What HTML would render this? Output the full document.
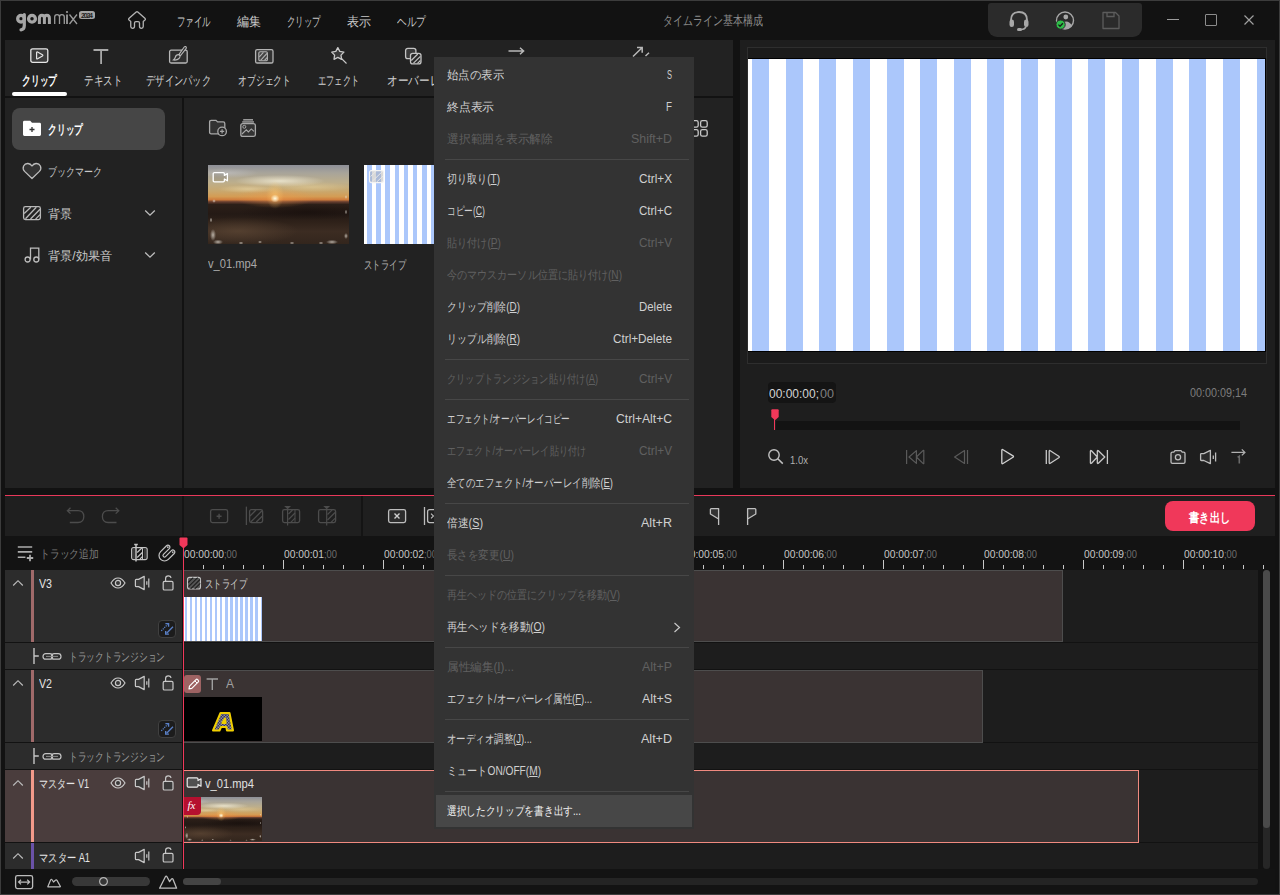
<!DOCTYPE html><html><head><meta charset="utf-8"><style>
html,body{margin:0;padding:0;}
body{width:1280px;height:895px;overflow:hidden;position:relative;background:#121212;font-family:'Liberation Sans',sans-serif;}
body>div,body>svg,body>span{position:absolute;box-sizing:border-box;}
body>span{white-space:nowrap;transform-origin:0 0;}
</style></head><body>
<div style="left:0px;top:0px;width:1280px;height:895px;background:#121212;"></div>
<div style="left:5px;top:40px;width:728px;height:56px;background:#222222;"></div>
<div style="left:5px;top:98px;width:177px;height:390px;background:#222222;"></div>
<div style="left:184px;top:98px;width:549px;height:390px;background:#222222;"></div>
<div style="left:740px;top:40px;width:535px;height:448px;background:#1e1e1e;"></div>
<div style="left:747px;top:47px;width:520px;height:317px;background:#1b1b1b;border:1px solid #2e2e2e"></div>
<div style="left:748px;top:58px;width:518px;height:294px;background:#000;"></div>
<div style="left:748px;top:59px;width:517px;height:292px;background:repeating-linear-gradient(90deg,#ffffff -12.64px,#ffffff 4px,#abc7fb 4px,#abc7fb 21px);"></div>
<div style="left:5px;top:495px;width:1270px;height:1px;background:#e8385a;"></div>
<div style="left:5px;top:496px;width:1270px;height:40px;background:#1f1f1f;"></div>
<div style="left:182px;top:496px;width:2px;height:40px;background:#141414;"></div>
<div style="left:361px;top:496px;width:2px;height:40px;background:#141414;"></div>
<div style="left:5px;top:536px;width:1270px;height:34px;background:#131313;"></div>
<div style="left:5px;top:570px;width:177px;height:72px;background:#2c2c2c;"></div>
<div style="left:184px;top:570px;width:1074px;height:72px;background:#1d1d1d;"></div>
<div style="left:5px;top:643px;width:177px;height:26px;background:#2c2c2c;"></div>
<div style="left:184px;top:643px;width:1074px;height:26px;background:#1d1d1d;"></div>
<div style="left:5px;top:670px;width:177px;height:72px;background:#2c2c2c;"></div>
<div style="left:184px;top:670px;width:1074px;height:72px;background:#1d1d1d;"></div>
<div style="left:5px;top:743px;width:177px;height:26px;background:#2c2c2c;"></div>
<div style="left:184px;top:743px;width:1074px;height:26px;background:#1d1d1d;"></div>
<div style="left:5px;top:770px;width:177px;height:72px;background:#4a3d3d;"></div>
<div style="left:184px;top:770px;width:1074px;height:72px;background:#1d1d1d;"></div>
<div style="left:5px;top:843px;width:177px;height:26px;background:#2c2c2c;"></div>
<div style="left:184px;top:843px;width:1074px;height:26px;background:#1d1d1d;"></div>
<div style="left:31px;top:570px;width:3px;height:72px;background:#a06a6a;"></div>
<div style="left:31px;top:670px;width:3px;height:72px;background:#a06a6a;"></div>
<div style="left:31px;top:770px;width:3px;height:72px;background:#f29a8a;"></div>
<div style="left:31px;top:843px;width:3px;height:26px;background:#6a52a8;"></div>
<div style="left:184px;top:570px;width:879px;height:72px;background:#3a3333;border:1px solid #4d4d4d;border-left:none"></div>
<div style="left:184px;top:670px;width:799px;height:73px;background:#3a3333;border:1px solid #4d4d4d;border-left:none"></div>
<div style="left:184px;top:770px;width:955px;height:73px;background:#3a3333;border:1px solid #f08a80;border-left:none"></div>
<div style="left:5px;top:869px;width:1270px;height:25px;background:#131313;"></div>
<div style="left:1263px;top:570px;width:7px;height:299px;background:#262626;border-radius:4px"></div>
<div style="left:1263px;top:570px;width:7px;height:258px;background:#4a4a4a;border-radius:4px"></div>
<div style="left:12px;top:92px;width:55px;height:4px;background:#ffffff;border-radius:2px"></div>
<div style="left:12px;top:108px;width:153px;height:42px;background:#464646;border-radius:8px"></div>
<div style="left:208px;top:165px;width:141px;height:79px;background:radial-gradient(ellipse 3.0px 6.0px at 5.0px 70.0px,rgba(235,230,220,.7) 0,rgba(235,230,220,0) 100%),radial-gradient(ellipse 5.0px 2.5px at 10.0px 77.0px,rgba(235,230,220,.7) 0,rgba(235,230,220,0) 100%),radial-gradient(ellipse 1.5px 2.5px at 3.0px 55.0px,rgba(235,230,220,.7) 0,rgba(235,230,220,0) 100%),radial-gradient(ellipse 2.5px 1.5px at 33.0px 78.0px,rgba(235,230,220,.7) 0,rgba(235,230,220,0) 100%),radial-gradient(ellipse 2.0px 1.5px at 52.0px 77.0px,rgba(235,230,220,.7) 0,rgba(235,230,220,0) 100%),radial-gradient(ellipse 2.5px 1.3px at 84.0px 78.0px,rgba(235,230,220,.7) 0,rgba(235,230,220,0) 100%),radial-gradient(ellipse 6.0px 2.2px at 124.0px 77.0px,rgba(235,230,220,.7) 0,rgba(235,230,220,0) 100%),radial-gradient(ellipse 2.0px 3.0px at 138.0px 71.0px,rgba(235,230,220,.7) 0,rgba(235,230,220,0) 100%),radial-gradient(ellipse 1.2px 2.0px at 138.0px 32.0px,rgba(235,230,220,.7) 0,rgba(235,230,220,0) 100%),radial-gradient(ellipse 1.2px 2.5px at 138.0px 47.0px,rgba(235,230,220,.7) 0,rgba(235,230,220,0) 100%),radial-gradient(ellipse 1.8px 1.8px at 6.0px 36.0px,rgba(235,230,220,.7) 0,rgba(235,230,220,0) 100%),radial-gradient(ellipse 2.5px 1.3px at 113.0px 78.0px,rgba(235,230,220,.7) 0,rgba(235,230,220,0) 100%),radial-gradient(ellipse 4.5px 4.0px at 67.0px 33.5px,#fffbe0 0,rgba(255,200,90,0) 100%),radial-gradient(ellipse 9.0px 14.0px at 67.0px 30.0px,rgba(255,200,110,.55) 0,rgba(255,170,70,0) 100%),radial-gradient(ellipse 40.0px 10.0px at 67.0px 33.0px,rgba(240,150,70,.5) 0,rgba(240,140,60,0) 100%),radial-gradient(ellipse 45.0px 6.0px at 72.0px 16.0px,rgba(250,245,225,.7) 0,rgba(250,245,225,0) 100%),radial-gradient(ellipse 30.0px 4.0px at 40.0px 24.0px,rgba(240,225,180,.5) 0,rgba(240,225,180,0) 100%),radial-gradient(ellipse 40.0px 5.0px at 105.0px 22.0px,rgba(235,215,160,.45) 0,rgba(235,215,160,0) 100%),radial-gradient(ellipse 30.0px 5.0px at 20.0px 8.0px,rgba(200,200,205,.5) 0,rgba(200,200,205,0) 100%),radial-gradient(ellipse 60.0px 14.0px at 30.0px 66.0px,rgba(92,70,52,.75) 0,rgba(92,70,52,0) 100%),radial-gradient(ellipse 70.0px 8.0px at 100.0px 47.0px,rgba(20,12,10,.6) 0,rgba(20,12,10,0) 100%),linear-gradient(180deg,#8e9098 0%,#a8a49a 10%,#bcae8c 22%,#c9a86e 33%,#d49c54 40%,#cf7c3c 44%,#6a4030 46.5%,#2c1f18 50%,#241a15 62%,#2e2119 72%,#3c2c22 84%,#33261d 100%);"></div>
<div style="left:364px;top:165px;width:70px;height:79px;background:repeating-linear-gradient(90deg,#ffffff -1.57px,#ffffff 3px,#abc7fb 3px,#abc7fb 7.6px);"></div>
<div style="left:768px;top:382px;width:68px;height:21px;background:#141414;border-radius:4px"></div>
<div style="left:776px;top:421px;width:464px;height:9px;background:#131313;"></div>
<div style="left:72px;top:877px;width:78px;height:9px;background:#383838;border-radius:5px"></div>
<div style="left:183px;top:878px;width:1075px;height:7px;background:#242424;border-radius:3.5px"></div>
<div style="left:183px;top:878px;width:38px;height:7px;background:#444444;border-radius:3.5px"></div>
<div style="left:158px;top:620px;width:18px;height:18px;background:#1c1c1c;border-radius:4px;border:1px solid #404040"></div>
<div style="left:158px;top:720px;width:18px;height:18px;background:#1c1c1c;border-radius:4px;border:1px solid #404040"></div>
<div style="left:184px;top:597px;width:78px;height:44px;background:repeating-linear-gradient(90deg,#ffffff -2.07px,#ffffff 0.5px,#abc7fb 0.5px,#abc7fb 3px);"></div>
<div style="left:184px;top:697px;width:78px;height:44px;background:#000;"></div>
<div style="left:184px;top:797px;width:78px;height:44px;background:radial-gradient(ellipse 1.7px 3.3px at 2.8px 38.7px,rgba(235,230,220,.7) 0,rgba(235,230,220,0) 100%),radial-gradient(ellipse 2.8px 1.4px at 5.5px 42.6px,rgba(235,230,220,.7) 0,rgba(235,230,220,0) 100%),radial-gradient(ellipse 0.8px 1.4px at 1.7px 30.4px,rgba(235,230,220,.7) 0,rgba(235,230,220,0) 100%),radial-gradient(ellipse 1.4px 0.8px at 18.3px 43.1px,rgba(235,230,220,.7) 0,rgba(235,230,220,0) 100%),radial-gradient(ellipse 1.1px 0.8px at 28.8px 42.6px,rgba(235,230,220,.7) 0,rgba(235,230,220,0) 100%),radial-gradient(ellipse 1.4px 0.7px at 46.5px 43.1px,rgba(235,230,220,.7) 0,rgba(235,230,220,0) 100%),radial-gradient(ellipse 3.3px 1.2px at 68.6px 42.6px,rgba(235,230,220,.7) 0,rgba(235,230,220,0) 100%),radial-gradient(ellipse 1.1px 1.7px at 76.3px 39.3px,rgba(235,230,220,.7) 0,rgba(235,230,220,0) 100%),radial-gradient(ellipse 0.7px 1.1px at 76.3px 17.7px,rgba(235,230,220,.7) 0,rgba(235,230,220,0) 100%),radial-gradient(ellipse 0.7px 1.4px at 76.3px 26.0px,rgba(235,230,220,.7) 0,rgba(235,230,220,0) 100%),radial-gradient(ellipse 1.0px 1.0px at 3.3px 19.9px,rgba(235,230,220,.7) 0,rgba(235,230,220,0) 100%),radial-gradient(ellipse 1.4px 0.7px at 62.5px 43.1px,rgba(235,230,220,.7) 0,rgba(235,230,220,0) 100%),radial-gradient(ellipse 2.5px 2.2px at 37.1px 18.5px,#fffbe0 0,rgba(255,200,90,0) 100%),radial-gradient(ellipse 5.0px 7.7px at 37.1px 16.6px,rgba(255,200,110,.55) 0,rgba(255,170,70,0) 100%),radial-gradient(ellipse 22.1px 5.5px at 37.1px 18.3px,rgba(240,150,70,.5) 0,rgba(240,140,60,0) 100%),radial-gradient(ellipse 24.9px 3.3px at 39.8px 8.9px,rgba(250,245,225,.7) 0,rgba(250,245,225,0) 100%),radial-gradient(ellipse 16.6px 2.2px at 22.1px 13.3px,rgba(240,225,180,.5) 0,rgba(240,225,180,0) 100%),radial-gradient(ellipse 22.1px 2.8px at 58.1px 12.2px,rgba(235,215,160,.45) 0,rgba(235,215,160,0) 100%),radial-gradient(ellipse 16.6px 2.8px at 11.1px 4.4px,rgba(200,200,205,.5) 0,rgba(200,200,205,0) 100%),radial-gradient(ellipse 33.2px 7.7px at 16.6px 36.5px,rgba(92,70,52,.75) 0,rgba(92,70,52,0) 100%),radial-gradient(ellipse 38.7px 4.4px at 55.3px 26.0px,rgba(20,12,10,.6) 0,rgba(20,12,10,0) 100%),linear-gradient(180deg,#8e9098 0%,#a8a49a 10%,#bcae8c 22%,#c9a86e 33%,#d49c54 40%,#cf7c3c 44%,#6a4030 46.5%,#2c1f18 50%,#241a15 62%,#2e2119 72%,#3c2c22 84%,#33261d 100%);"></div>
<div style="left:184px;top:797px;width:17px;height:18px;background:#b5102f;border-radius:0 0 4px 0"></div>
<div style="left:184px;top:675px;width:17px;height:18px;background:#9e6363;border-radius:3px"></div>
<div style="left:183px;top:560px;width:1px;height:9px;background:#c8c8c8;"></div>
<div style="left:203px;top:565px;width:1px;height:4px;background:#c8c8c8;"></div>
<div style="left:223px;top:565px;width:1px;height:4px;background:#c8c8c8;"></div>
<div style="left:243px;top:565px;width:1px;height:4px;background:#c8c8c8;"></div>
<div style="left:263px;top:565px;width:1px;height:4px;background:#c8c8c8;"></div>
<div style="left:283px;top:560px;width:1px;height:9px;background:#c8c8c8;"></div>
<div style="left:303px;top:565px;width:1px;height:4px;background:#c8c8c8;"></div>
<div style="left:323px;top:565px;width:1px;height:4px;background:#c8c8c8;"></div>
<div style="left:343px;top:565px;width:1px;height:4px;background:#c8c8c8;"></div>
<div style="left:363px;top:565px;width:1px;height:4px;background:#c8c8c8;"></div>
<div style="left:383px;top:560px;width:1px;height:9px;background:#c8c8c8;"></div>
<div style="left:403px;top:565px;width:1px;height:4px;background:#c8c8c8;"></div>
<div style="left:423px;top:565px;width:1px;height:4px;background:#c8c8c8;"></div>
<div style="left:443px;top:565px;width:1px;height:4px;background:#c8c8c8;"></div>
<div style="left:463px;top:565px;width:1px;height:4px;background:#c8c8c8;"></div>
<div style="left:483px;top:560px;width:1px;height:9px;background:#c8c8c8;"></div>
<div style="left:503px;top:565px;width:1px;height:4px;background:#c8c8c8;"></div>
<div style="left:523px;top:565px;width:1px;height:4px;background:#c8c8c8;"></div>
<div style="left:543px;top:565px;width:1px;height:4px;background:#c8c8c8;"></div>
<div style="left:563px;top:565px;width:1px;height:4px;background:#c8c8c8;"></div>
<div style="left:583px;top:560px;width:1px;height:9px;background:#c8c8c8;"></div>
<div style="left:603px;top:565px;width:1px;height:4px;background:#c8c8c8;"></div>
<div style="left:623px;top:565px;width:1px;height:4px;background:#c8c8c8;"></div>
<div style="left:643px;top:565px;width:1px;height:4px;background:#c8c8c8;"></div>
<div style="left:663px;top:565px;width:1px;height:4px;background:#c8c8c8;"></div>
<div style="left:683px;top:560px;width:1px;height:9px;background:#c8c8c8;"></div>
<div style="left:703px;top:565px;width:1px;height:4px;background:#c8c8c8;"></div>
<div style="left:723px;top:565px;width:1px;height:4px;background:#c8c8c8;"></div>
<div style="left:743px;top:565px;width:1px;height:4px;background:#c8c8c8;"></div>
<div style="left:763px;top:565px;width:1px;height:4px;background:#c8c8c8;"></div>
<div style="left:783px;top:560px;width:1px;height:9px;background:#c8c8c8;"></div>
<div style="left:803px;top:565px;width:1px;height:4px;background:#c8c8c8;"></div>
<div style="left:823px;top:565px;width:1px;height:4px;background:#c8c8c8;"></div>
<div style="left:843px;top:565px;width:1px;height:4px;background:#c8c8c8;"></div>
<div style="left:863px;top:565px;width:1px;height:4px;background:#c8c8c8;"></div>
<div style="left:883px;top:560px;width:1px;height:9px;background:#c8c8c8;"></div>
<div style="left:903px;top:565px;width:1px;height:4px;background:#c8c8c8;"></div>
<div style="left:923px;top:565px;width:1px;height:4px;background:#c8c8c8;"></div>
<div style="left:943px;top:565px;width:1px;height:4px;background:#c8c8c8;"></div>
<div style="left:963px;top:565px;width:1px;height:4px;background:#c8c8c8;"></div>
<div style="left:983px;top:560px;width:1px;height:9px;background:#c8c8c8;"></div>
<div style="left:1003px;top:565px;width:1px;height:4px;background:#c8c8c8;"></div>
<div style="left:1023px;top:565px;width:1px;height:4px;background:#c8c8c8;"></div>
<div style="left:1043px;top:565px;width:1px;height:4px;background:#c8c8c8;"></div>
<div style="left:1063px;top:565px;width:1px;height:4px;background:#c8c8c8;"></div>
<div style="left:1083px;top:560px;width:1px;height:9px;background:#c8c8c8;"></div>
<div style="left:1103px;top:565px;width:1px;height:4px;background:#c8c8c8;"></div>
<div style="left:1123px;top:565px;width:1px;height:4px;background:#c8c8c8;"></div>
<div style="left:1143px;top:565px;width:1px;height:4px;background:#c8c8c8;"></div>
<div style="left:1163px;top:565px;width:1px;height:4px;background:#c8c8c8;"></div>
<div style="left:1183px;top:560px;width:1px;height:9px;background:#c8c8c8;"></div>
<div style="left:1203px;top:565px;width:1px;height:4px;background:#c8c8c8;"></div>
<div style="left:1223px;top:565px;width:1px;height:4px;background:#c8c8c8;"></div>
<div style="left:1243px;top:565px;width:1px;height:4px;background:#c8c8c8;"></div>
<div style="left:1263px;top:565px;width:1px;height:4px;background:#c8c8c8;"></div>
<div style="left:182.7px;top:548px;width:1.5px;height:321px;background:#f0385a;"></div>
<svg style="left:179px;top:537px;" width="9" height="12" viewBox="0 0 9 12" fill="none"><path d="M1.5 0.5 H7.5 Q8.5 0.5 8.5 1.5 V8 L4.5 11.5 L0.5 8 V1.5 Q0.5 0.5 1.5 0.5Z" fill="#f0385a"/></svg>
<svg style="left:770.5px;top:409px;" width="8" height="12" viewBox="0 0 8 12" fill="none"><path d="M1.3 0.3 H6.7 Q7.7 0.3 7.7 1.3 V8 L4 11.2 L0.3 8 V1.3 Q0.3 0.3 1.3 0.3Z" fill="#f0385a"/></svg>
<div style="left:774px;top:419px;width:1px;height:11px;background:#f0385a;"></div>
<span id="t0" style="transform:scaleX(0.6538);left:177px;top:15px;font-size:13px;line-height:13px;color:#c8c8c8;font-weight:400;">ファイル</span>
<span id="t1" style="transform:scaleX(0.9231);left:237px;top:15px;font-size:13px;line-height:13px;color:#c8c8c8;font-weight:400;">編集</span>
<span id="t2" style="transform:scaleX(0.6538);left:287px;top:15px;font-size:13px;line-height:13px;color:#c8c8c8;font-weight:400;">クリップ</span>
<span id="t3" style="transform:scaleX(0.9231);left:347px;top:15px;font-size:13px;line-height:13px;color:#c8c8c8;font-weight:400;">表示</span>
<span id="t4" style="transform:scaleX(0.7436);left:397px;top:15px;font-size:13px;line-height:13px;color:#c8c8c8;font-weight:400;">ヘルプ</span>
<span id="t5" style="transform:scaleX(0.7692);left:663px;top:14px;font-size:13px;line-height:13px;color:#8c8c8c;font-weight:400;">タイムライン基本構成</span>
<span id="t6" style="transform:scaleX(0.6731);left:22px;top:74px;font-size:13px;line-height:13px;color:#ffffff;font-weight:700;">クリップ</span>
<span id="t7" style="transform:scaleX(0.7308);left:84px;top:74px;font-size:13px;line-height:13px;color:#d2d2d2;font-weight:400;">テキスト</span>
<span id="t8" style="transform:scaleX(0.7143);left:146px;top:74px;font-size:13px;line-height:13px;color:#d2d2d2;font-weight:400;">デザインパック</span>
<span id="t9" style="transform:scaleX(0.6795);left:238px;top:74px;font-size:13px;line-height:13px;color:#d2d2d2;font-weight:400;">オブジェクト</span>
<span id="t10" style="transform:scaleX(0.6308);left:318px;top:74px;font-size:13px;line-height:13px;color:#d2d2d2;font-weight:400;">エフェクト</span>
<span id="t11" style="transform:scaleX(0.8205);left:387px;top:74px;font-size:13px;line-height:13px;color:#d2d2d2;font-weight:400;">オーバーレイ</span>
<span id="t12" style="transform:scaleX(0.6731);left:48px;top:123px;font-size:13px;line-height:13px;color:#ffffff;font-weight:700;">クリップ</span>
<span id="t13" style="transform:scaleX(0.7500);left:48px;top:166px;font-size:12px;line-height:12px;color:#c8c8c8;font-weight:400;">ブックマーク</span>
<span id="t14" style="transform:scaleX(1.0000);left:48px;top:208px;font-size:12px;line-height:12px;color:#c8c8c8;font-weight:400;">背景</span>
<span id="t15" style="transform:scaleX(1.0104);left:48px;top:250px;font-size:12px;line-height:12px;color:#c8c8c8;font-weight:400;">背景/効果音</span>
<span id="t16" style="transform:scaleX(0.9297);left:208px;top:258px;font-size:12px;line-height:12px;color:#a8a8a8;font-weight:400;">v_01.mp4</span>
<span id="t17" style="transform:scaleX(0.7000);left:364px;top:259px;font-size:12px;line-height:12px;color:#b4b4b4;font-weight:400;">ストライプ</span>
<span id="t18" style="transform:scaleX(0.9222);left:769px;top:387px;font-size:13px;line-height:13px;color:#d4d4d4;font-weight:400;">00:00:00;</span>
<span id="t19" style="transform:scaleX(0.9676);left:820px;top:387px;font-size:13px;line-height:13px;color:#808080;font-weight:400;">00</span>
<span id="t20" style="transform:scaleX(0.8990);left:1190px;top:387px;font-size:12px;line-height:12px;color:#7c7c7c;font-weight:400;">00:00:09;14</span>
<span id="t21" style="transform:scaleX(0.8655);left:790px;top:455px;font-size:11px;line-height:11px;color:#b0b0b0;font-weight:400;">1.0x</span>
<span id="t22" style="transform:scaleX(0.8194);left:40px;top:548px;font-size:12px;line-height:12px;color:#7a7a7a;font-weight:400;">トラック追加</span>
<span id="t23" style="transform:scaleX(0.9340);left:184px;top:549px;font-size:11px;line-height:11px;color:#c8c8c8;font-weight:400;">00:00:00</span>
<span id="t24" style="transform:scaleX(0.8498);left:224px;top:549px;font-size:11px;line-height:11px;color:#6e6e6e;font-weight:400;">;00</span>
<span id="t25" style="transform:scaleX(0.9340);left:284px;top:549px;font-size:11px;line-height:11px;color:#c8c8c8;font-weight:400;">00:00:01</span>
<span id="t26" style="transform:scaleX(0.8498);left:324px;top:549px;font-size:11px;line-height:11px;color:#6e6e6e;font-weight:400;">;00</span>
<span id="t27" style="transform:scaleX(0.9340);left:384px;top:549px;font-size:11px;line-height:11px;color:#c8c8c8;font-weight:400;">00:00:02</span>
<span id="t28" style="transform:scaleX(0.8498);left:424px;top:549px;font-size:11px;line-height:11px;color:#6e6e6e;font-weight:400;">;00</span>
<span id="t29" style="transform:scaleX(0.9340);left:484px;top:549px;font-size:11px;line-height:11px;color:#c8c8c8;font-weight:400;">00:00:03</span>
<span id="t30" style="transform:scaleX(0.8498);left:524px;top:549px;font-size:11px;line-height:11px;color:#6e6e6e;font-weight:400;">;00</span>
<span id="t31" style="transform:scaleX(0.9340);left:584px;top:549px;font-size:11px;line-height:11px;color:#c8c8c8;font-weight:400;">00:00:04</span>
<span id="t32" style="transform:scaleX(0.8498);left:624px;top:549px;font-size:11px;line-height:11px;color:#6e6e6e;font-weight:400;">;00</span>
<span id="t33" style="transform:scaleX(0.9340);left:684px;top:549px;font-size:11px;line-height:11px;color:#c8c8c8;font-weight:400;">00:00:05</span>
<span id="t34" style="transform:scaleX(0.8498);left:724px;top:549px;font-size:11px;line-height:11px;color:#6e6e6e;font-weight:400;">;00</span>
<span id="t35" style="transform:scaleX(0.9340);left:784px;top:549px;font-size:11px;line-height:11px;color:#c8c8c8;font-weight:400;">00:00:06</span>
<span id="t36" style="transform:scaleX(0.8498);left:824px;top:549px;font-size:11px;line-height:11px;color:#6e6e6e;font-weight:400;">;00</span>
<span id="t37" style="transform:scaleX(0.9340);left:884px;top:549px;font-size:11px;line-height:11px;color:#c8c8c8;font-weight:400;">00:00:07</span>
<span id="t38" style="transform:scaleX(0.8498);left:924px;top:549px;font-size:11px;line-height:11px;color:#6e6e6e;font-weight:400;">;00</span>
<span id="t39" style="transform:scaleX(0.9340);left:984px;top:549px;font-size:11px;line-height:11px;color:#c8c8c8;font-weight:400;">00:00:08</span>
<span id="t40" style="transform:scaleX(0.8498);left:1024px;top:549px;font-size:11px;line-height:11px;color:#6e6e6e;font-weight:400;">;00</span>
<span id="t41" style="transform:scaleX(0.9340);left:1084px;top:549px;font-size:11px;line-height:11px;color:#c8c8c8;font-weight:400;">00:00:09</span>
<span id="t42" style="transform:scaleX(0.8498);left:1124px;top:549px;font-size:11px;line-height:11px;color:#6e6e6e;font-weight:400;">;00</span>
<span id="t43" style="transform:scaleX(0.9340);left:1184px;top:549px;font-size:11px;line-height:11px;color:#c8c8c8;font-weight:400;">00:00:10</span>
<span id="t44" style="transform:scaleX(0.8498);left:1224px;top:549px;font-size:11px;line-height:11px;color:#6e6e6e;font-weight:400;">;00</span>
<span id="t45" style="transform:scaleX(0.8851);left:39px;top:578px;font-size:12px;line-height:12px;color:#e6e6e6;font-weight:400;">V3</span>
<span id="t46" style="transform:scaleX(0.8851);left:39px;top:678px;font-size:12px;line-height:12px;color:#e6e6e6;font-weight:400;">V2</span>
<span id="t47" style="transform:scaleX(0.7574);left:39px;top:778px;font-size:12px;line-height:12px;color:#e6e6e6;font-weight:400;">マスター V1</span>
<span id="t48" style="transform:scaleX(0.7725);left:39px;top:852px;font-size:12px;line-height:12px;color:#e6e6e6;font-weight:400;">マスター A1</span>
<span id="t49" style="transform:scaleX(0.7273);left:69px;top:651px;font-size:12px;line-height:12px;color:#9a9a9a;font-weight:400;">トラックトランジション</span>
<span id="t50" style="transform:scaleX(0.7273);left:69px;top:751px;font-size:12px;line-height:12px;color:#9a9a9a;font-weight:400;">トラックトランジション</span>
<span id="t51" style="transform:scaleX(0.7000);left:205px;top:578px;font-size:12px;line-height:12px;color:#cfcfcf;font-weight:400;">ストライプ</span>
<span id="t52" style="transform:scaleX(0.9981);left:226px;top:678px;font-size:12px;line-height:12px;color:#a0a0a0;font-weight:400;">A</span>
<span id="t53" style="transform:scaleX(0.9297);left:205px;top:778px;font-size:12px;line-height:12px;color:#e0e0e0;font-weight:400;">v_01.mp4</span>
<div style="left:1165px;top:501px;width:90px;height:30px;background:#f0385a;border-radius:8px"></div>
<span id="t54" style="transform:scaleX(0.7885);left:1189px;top:511px;font-size:13px;line-height:13px;color:#ffffff;font-weight:700;">書き出し</span>
<svg style="left:14px;top:10px;" width="40" height="22" viewBox="0 0 40 22" fill="none"><circle cx="7" cy="8.7" r="3.3" stroke="#a6a6a6" stroke-width="3.3"/><path d="M10.3 4.5 V15.5 Q10.3 19.5 7 19.8" stroke="#a6a6a6" stroke-width="3.2" stroke-linecap="round"/><circle cx="18" cy="8.7" r="3.4" stroke="#a6a6a6" stroke-width="3.3"/><path d="M25.4 14 V8.2 Q25.4 5.2 27.9 5.2 Q30.4 5.2 30.4 8.2 V14 M30.4 8.2 Q30.4 5.2 32.9 5.2 Q35.4 5.2 35.4 8.2 V14" stroke="#a6a6a6" stroke-width="3"/></svg>
<svg style="left:52px;top:9px;" width="28" height="17" viewBox="0 0 28 17" fill="none"><path d="M2.7 15 V8 Q2.7 5.6 5.1 5.6 Q7.5 5.6 7.5 8 V15 M7.5 8 Q7.5 5.6 9.9 5.6 Q12.3 5.6 12.3 8 V15" stroke="#9a9a9a" stroke-width="1.3"/><path d="M15 5.5 V15" stroke="#9a9a9a" stroke-width="1.8"/><circle cx="15" cy="3" r="1.1" fill="#9a9a9a"/><path d="M17.5 5.5 L25 15 M25 5.5 L17.5 15" stroke="#9a9a9a" stroke-width="1.3"/></svg>
<div style="left:79px;top:11px;width:16px;height:8px;background:#a4a4a4;border-radius:2.5px"></div>
<svg style="left:79px;top:11px;" width="16" height="8" viewBox="0 0 16 8" fill="none"><text x="8" y="6.7" font-family="Liberation Sans" font-size="7" font-weight="700" fill="#222" text-anchor="middle" textLength="12">2024</text></svg>
<svg style="left:126px;top:9px;" width="22" height="22" viewBox="0 0 22 22" fill="none"><path d="M4.75 12.4 V17.5 Q4.75 19.3 6.6 19.3 Q8.5 19.3 8.5 17.5 V14 Q8.5 12.6 9.9 12.6 H12.1 Q13.5 12.6 13.5 14 V17.5 Q13.5 19.3 15.4 19.3 Q17.25 19.3 17.25 17.5 V12.4 L18.9 11.1 Q19.9 10.2 18.9 9.3 L11.8 3.1 Q11 2.4 10.2 3.1 L3.1 9.3 Q2.1 10.2 3.1 11.1 Z" stroke="#b4b4b4" stroke-width="1.3" stroke-linejoin="round"/></svg>
<div style="left:988px;top:3px;width:154px;height:34px;background:#2b2b2b;border-radius:3px 3px 9px 9px"></div>
<svg style="left:1006px;top:9px;" width="26" height="24" viewBox="0 0 26 24" fill="none"><path d="M5 13 V11 Q5 3 13 3 Q21 3 21 11 V13" stroke="#a8a8a8" stroke-width="1.8"/><rect x="3.5" y="10.5" width="4.5" height="7.5" rx="2.2" fill="#a8a8a8"/><rect x="18" y="10.5" width="4.5" height="7.5" rx="2.2" fill="#a8a8a8"/><path d="M20 17.5 Q19 20.5 15 20.5" stroke="#a8a8a8" stroke-width="1.6"/><rect x="11" y="19" width="5" height="3" rx="1.5" fill="#a8a8a8"/></svg>
<svg style="left:1053px;top:9px;" width="24" height="24" viewBox="0 0 24 24" fill="none"><circle cx="12" cy="11.5" r="8.5" stroke="#a8a8a8" stroke-width="1.4"/><circle cx="12.8" cy="8" r="2.4" fill="#a8a8a8"/><path d="M7.5 18.5 Q9 12.5 13 12.5 Q17 12.5 19 17 Q16 20 12 20 Z" fill="#a8a8a8"/><circle cx="7.6" cy="15.6" r="4.6" fill="#2fbf49" stroke="#2b2b2b" stroke-width="1"/><path d="M5.4 15.6 L7 17.2 L9.9 14.2" stroke="#1a1a1a" stroke-width="1.3" fill="none"/></svg>
<svg style="left:1100px;top:10px;" width="22" height="21" viewBox="0 0 22 21" fill="none"><path d="M3 2.5 H15.5 L19 6 V18.5 H3 Z" stroke="#5c5c5c" stroke-width="1.3" stroke-linejoin="round"/><path d="M7 2.5 V6.5 H14 V2.5" stroke="#5c5c5c" stroke-width="1.3"/></svg>
<div style="left:1167px;top:19px;width:12px;height:1.4px;background:#9c9c9c;"></div>
<div style="left:1205px;top:14px;width:12px;height:12px;background:transparent;border:1.3px solid #8c8c8c;border-radius:1px"></div>
<svg style="left:1243px;top:14px;" width="12" height="12" viewBox="0 0 12 12" fill="none"><path d="M1.5 1.5 L10.5 10.5 M10.5 1.5 L1.5 10.5" stroke="#a0a0a0" stroke-width="1.2"/></svg>
<svg style="left:28px;top:47px;" width="22" height="18" viewBox="0 0 22 18" fill="none"><rect x="2.8" y="1.8" width="17" height="13.6" rx="1.8" fill="#3c3c3c" stroke="#e6e6e6" stroke-width="1.3"/><path d="M8.6 5.6 Q8.6 4.5 9.6 5 L14.4 7.8 Q15.3 8.4 14.4 9 L9.6 11.8 Q8.6 12.3 8.6 11.2 Z" stroke="#e6e6e6" stroke-width="1.2" stroke-linejoin="round"/></svg>
<svg style="left:92px;top:47px;" width="18" height="19" viewBox="0 0 18 19" fill="none"><path d="M1.5 3 H16.3 M9.1 3 V17" stroke="#a8a8a8" stroke-width="1.8"/></svg>
<svg style="left:167px;top:45px;" width="24" height="20" viewBox="0 0 24 20" fill="none"><rect x="2.6" y="5.2" width="17.6" height="12.8" rx="1.5" fill="#2e2e2e" stroke="#b8b8b8" stroke-width="1.3"/><path d="M18.6 1.6 Q19.8 2.3 19.2 3.4 L13.6 10.6 L12 9.4 L17.2 2 Q17.8 1.2 18.6 1.6 Z" fill="#2e2e2e" stroke="#b8b8b8" stroke-width="1.1"/><path d="M11.6 9.6 Q9 9.5 8.4 12 Q8 13.8 6.4 15 Q10 15.5 12 13.5 Q13.5 12 13 10.8 Z" fill="#2e2e2e" stroke="#b8b8b8" stroke-width="1.1"/></svg>
<svg style="left:253px;top:47px;" width="22" height="18" viewBox="0 0 22 18" fill="none"><rect x="2.6" y="2.6" width="17.4" height="13.4" rx="1.6" fill="#333" stroke="#b4b4b4" stroke-width="1.3"/><rect x="5.8" y="4.8" width="8.6" height="9" rx="1.3" fill="#444" stroke="#b4b4b4" stroke-width="1.1"/><path d="M6.3 9.8 L10.4 5.3 M7.6 13.3 L14 6.3 M11.5 13.3 L14 10.6" stroke="#b4b4b4" stroke-width="1.1"/></svg>
<svg style="left:329px;top:45px;" width="20" height="21" viewBox="0 0 20 21" fill="none"><path d="M8.8 2.6 L10.8 6.4 L14.9 7.1 L12 10.1 L12.6 14.3 L8.8 12.4 L5 14.3 L5.6 10.1 L2.7 7.1 L6.8 6.4 Z" fill="#3a3a3a" stroke="#c8c8c8" stroke-width="1.3" stroke-linejoin="round"/><path d="M12.5 13.5 L17.5 18.5" stroke="#c8c8c8" stroke-width="1.1"/></svg>
<svg style="left:403px;top:46px;" width="21" height="20" viewBox="0 0 21 20" fill="none"><rect x="2.6" y="2.4" width="10.3" height="10.3" rx="2.2" fill="#3a3a3a" stroke="#c4c4c4" stroke-width="1.3"/><rect x="7.5" y="7.4" width="10.5" height="10.5" rx="2.2" fill="#2a2a2a" stroke="#c4c4c4" stroke-width="1.3"/><path d="M8.3 14.5 L14.8 8 M10.5 17.2 L17.4 10.3 M14.5 17.4 L17.4 14.5" stroke="#c4c4c4" stroke-width="1.2"/></svg>
<svg style="left:506px;top:46px;" width="22" height="10" viewBox="0 0 22 10" fill="none"><path d="M2.5 5 H17.5 M14 1.8 L17.6 5 L14 8.2" stroke="#b8b8b8" stroke-width="1.5"/></svg>
<svg style="left:630px;top:45px;" width="22" height="14" viewBox="0 0 22 14" fill="none"><path d="M3 11.5 L12 2.8 M7 2.6 H12.2 V7.8 M15.5 11 L19 7.8" stroke="#b8b8b8" stroke-width="1.5"/></svg>
<svg style="left:21px;top:119px;" width="22" height="19" viewBox="0 0 22 19" fill="none"><path d="M2 3.2 Q2 1.8 3.4 1.8 H9.2 L11 3.8 H18.6 Q20 3.8 20 5.2 V15.6 Q20 17 18.6 17 H3.4 Q2 17 2 15.6 Z" fill="#ffffff"/><path d="M8.5 10.5 H13.5 M11 8 V13" stroke="#333" stroke-width="1.3"/></svg>
<svg style="left:21px;top:161px;" width="22" height="20" viewBox="0 0 22 20" fill="none"><path d="M11 17.5 L3.6 10.4 Q1.3 8 2.6 5 Q4 2.3 7 2.5 Q9.5 2.7 11 5 Q12.5 2.7 15 2.5 Q18 2.3 19.4 5 Q20.7 8 18.4 10.4 Z" fill="#333" stroke="#bdbdbd" stroke-width="1.3" stroke-linejoin="round"/></svg>
<svg style="left:21px;top:204px;" width="22" height="18" viewBox="0 0 22 18" fill="none"><rect x="2.6" y="2.6" width="16.8" height="13" rx="1.8" stroke="#b8b8b8" stroke-width="1.3"/><path d="M3.2 9.5 L9.8 3.2 M4.5 14.8 L15.3 3.3 M9.5 15 L19 5.2 M14.6 15.1 L19 10.6" stroke="#b8b8b8" stroke-width="1.3"/></svg>
<svg style="left:22px;top:245px;" width="20" height="19" viewBox="0 0 20 19" fill="none"><path d="M8.5 14.5 V3.2 H16.8 V14.5" stroke="#bdbdbd" stroke-width="1.3"/><circle cx="5.6" cy="14.5" r="2.5" stroke="#bdbdbd" stroke-width="1.3"/><circle cx="14.3" cy="14.5" r="2.5" stroke="#bdbdbd" stroke-width="1.3"/></svg>
<svg style="left:143px;top:208px;" width="14" height="10" viewBox="0 0 14 10" fill="none"><path d="M2.2 2.5 L7 7.2 L11.8 2.5" stroke="#bdbdbd" stroke-width="1.3"/></svg>
<svg style="left:143px;top:250px;" width="14" height="10" viewBox="0 0 14 10" fill="none"><path d="M2.2 2.5 L7 7.2 L11.8 2.5" stroke="#bdbdbd" stroke-width="1.3"/></svg>
<svg style="left:207px;top:118px;" width="22" height="20" viewBox="0 0 22 20" fill="none"><path d="M2.6 4 Q2.6 2.4 4.2 2.4 H9 L10.6 3.9 H16.2 Q17.8 3.9 17.8 5.5 V14.2 Q17.8 15.8 16.2 15.8 H4.2 Q2.6 15.8 2.6 14.2 Z" fill="#333" stroke="#a8a8a8" stroke-width="1.3"/><circle cx="15.1" cy="13.4" r="4.3" fill="#2a2a2a" stroke="#a8a8a8" stroke-width="1.3"/><path d="M13 13.4 H17.2 M15.1 11.3 V15.5" stroke="#a8a8a8" stroke-width="1.2"/></svg>
<svg style="left:238px;top:117px;" width="20" height="22" viewBox="0 0 20 22" fill="none"><rect x="5.2" y="2" width="9.8" height="1.6" fill="#9a9a9a"/><rect x="4.2" y="4.2" width="11.8" height="1.5" fill="#9a9a9a"/><rect x="2.8" y="6.6" width="14.6" height="12.8" rx="2" fill="#333" stroke="#a8a8a8" stroke-width="1.3"/><circle cx="6.3" cy="9.8" r="1.5" stroke="#a8a8a8" stroke-width="1"/><path d="M4 17 L8.3 12.8 L10.4 15 L13.3 11.9 L16 14.3" stroke="#a8a8a8" stroke-width="1.1"/></svg>
<svg style="left:688px;top:118px;" width="22" height="20" viewBox="0 0 22 20" fill="none"><rect x="3.6" y="2.6" width="6.6" height="6.6" rx="1.8" stroke="#c8c8c8" stroke-width="1.3"/><rect x="12.6" y="2.6" width="6.6" height="6.6" rx="1.8" stroke="#c8c8c8" stroke-width="1.3"/><rect x="3.6" y="11.6" width="6.6" height="6.6" rx="1.8" stroke="#c8c8c8" stroke-width="1.3"/><rect x="12.6" y="11.6" width="6.6" height="6.6" rx="1.8" stroke="#c8c8c8" stroke-width="1.3"/></svg>
<svg style="left:211px;top:170px;" width="20" height="14" viewBox="0 0 20 14" fill="none"><path d="M3.4 2.6 H12.2 Q13.4 2.6 13.4 3.8 V5.4 L16.4 3.6 V10.8 L13.4 9 V10.6 Q13.4 11.8 12.2 11.8 H3.4 Q2.2 11.8 2.2 10.6 V3.8 Q2.2 2.6 3.4 2.6 Z" fill="rgba(0,0,0,.08)" stroke="#fff" stroke-width="1.3" stroke-linejoin="round"/></svg>
<svg style="left:367px;top:168px;" width="20" height="17" viewBox="0 0 20 17" fill="none"><rect x="2.5" y="2.6" width="14" height="12" rx="2" fill="rgba(170,170,170,.45)" stroke="#f4f4f4" stroke-width="1.1"/><path d="M3.5 8.6 L9 3.3 M4.5 14 L15.5 3.4 M9.5 14.2 L16 8" stroke="#e8e8e8" stroke-width="1"/></svg>
<svg style="left:766px;top:447px;" width="20" height="19" viewBox="0 0 20 19" fill="none"><circle cx="8" cy="8" r="5.2" stroke="#c0c0c0" stroke-width="1.4"/><path d="M11.8 11.8 L16.8 16.6" stroke="#c0c0c0" stroke-width="1.5"/></svg>
<svg style="left:904px;top:448px;" width="24" height="18" viewBox="0 0 24 18" fill="none"><path d="M2.6 2 V16" stroke="#5a5a5a" stroke-width="1.2"/><path d="M12.4 2.6 L5 9 L12.4 15.4 Z M19.8 2.6 Q19.8 2 19.2 2.4 L12.4 9 L19.2 15.6 Q19.8 16 19.8 15.4 Z" stroke="#5a5a5a" stroke-width="1.2" stroke-linejoin="round"/></svg>
<svg style="left:952px;top:448px;" width="18" height="18" viewBox="0 0 18 18" fill="none"><path d="M12.5 2.6 V15.4 L2.6 9 Z" stroke="#5a5a5a" stroke-width="1.2" stroke-linejoin="round"/><path d="M15.5 2 V16" stroke="#5a5a5a" stroke-width="1.2"/></svg>
<svg style="left:999px;top:447px;" width="18" height="20" viewBox="0 0 18 20" fill="none"><path d="M2.8 3.4 Q2.8 2 4 2.7 L14 8.9 Q15 9.6 14 10.3 L4 16.5 Q2.8 17.2 2.8 15.8 Z" fill="#2a2a2a" stroke="#d2d2d2" stroke-width="1.3" stroke-linejoin="round"/></svg>
<svg style="left:1044px;top:448px;" width="18" height="18" viewBox="0 0 18 18" fill="none"><path d="M2.3 2 V16" stroke="#c8c8c8" stroke-width="1.3"/><path d="M5.2 3.2 Q5.2 2 6.3 2.7 L14.8 8.2 Q15.8 9 14.8 9.8 L6.3 15.3 Q5.2 16 5.2 14.8 Z" fill="#2a2a2a" stroke="#c8c8c8" stroke-width="1.3" stroke-linejoin="round"/></svg>
<svg style="left:1088px;top:448px;" width="22" height="18" viewBox="0 0 22 18" fill="none"><path d="M2.4 3.2 Q2.4 2 3.5 2.8 L9.3 9 L3.5 15.2 Q2.4 16 2.4 14.8 Z M9.3 3.2 Q9.3 2 10.4 2.8 L16.8 9 L10.4 15.2 Q9.3 16 9.3 14.8 Z" fill="#2a2a2a" stroke="#c8c8c8" stroke-width="1.3" stroke-linejoin="round"/><path d="M19.4 2 V16" stroke="#c8c8c8" stroke-width="1.3"/></svg>
<svg style="left:1168px;top:448px;" width="20" height="18" viewBox="0 0 20 18" fill="none"><path d="M3 5.6 Q3 4.2 4.4 4.2 H5.8 L7 2.6 H13 L14.2 4.2 H15.6 Q17 4.2 17 5.6 V14 Q17 15.4 15.6 15.4 H4.4 Q3 15.4 3 14 Z" fill="#2a2a2a" stroke="#bcbcbc" stroke-width="1.3" stroke-linejoin="round"/><circle cx="10" cy="9.3" r="2.6" stroke="#bcbcbc" stroke-width="1.3"/></svg>
<svg style="left:1198px;top:448px;" width="20" height="18" viewBox="0 0 20 18" fill="none"><path d="M2.6 6.3 Q2.6 5.6 3.3 5.6 H5.8 L12.4 2.4 V15.6 L5.8 12.5 H3.3 Q2.6 12.5 2.6 11.8 Z" fill="#2a2a2a" stroke="#bcbcbc" stroke-width="1.3" stroke-linejoin="round"/><path d="M15.3 7.4 V11 M17.6 4.6 V13.6" stroke="#bcbcbc" stroke-width="1.3"/></svg>
<svg style="left:1229px;top:447px;" width="20" height="18" viewBox="0 0 20 18" fill="none"><path d="M2.4 5.4 H15.8 M12.8 2.4 L15.9 5.4 L12.8 8.4" stroke="#b0b0b0" stroke-width="1.3"/><path d="M8.6 10.4 L10.3 9.2 V16.5" stroke="#6a6a6a" stroke-width="1.6"/></svg>
<svg style="left:64px;top:505px;" width="26" height="22" viewBox="0 0 26 22" fill="none"><path d="M3.5 5.7 H14 Q19.8 5.7 19.8 11.6 Q19.8 17.5 14 17.5 H5.8 M6.5 2.8 L3.4 5.7 L6.5 8.6" stroke="#4c4c4c" stroke-width="1.3"/></svg>
<svg style="left:99px;top:505px;" width="24" height="22" viewBox="0 0 24 22" fill="none"><path d="M19.7 5.7 H9.2 Q3.4 5.7 3.4 11.6 Q3.4 17.5 9.2 17.5 H17.5 M16.7 2.8 L19.8 5.7 L16.7 8.6" stroke="#4c4c4c" stroke-width="1.3"/></svg>
<svg style="left:208px;top:507px;" width="22" height="18" viewBox="0 0 22 18" fill="none"><rect x="2.6" y="2.6" width="17" height="13" rx="1.8" stroke="#4c4c4c" stroke-width="1.3"/><path d="M8.6 9.2 H13.6 M11.1 6.7 V11.7" stroke="#4c4c4c" stroke-width="1.4"/></svg>
<svg style="left:244px;top:505px;" width="22" height="22" viewBox="0 0 22 22" fill="none"><path d="M2.4 1.6 V20" stroke="#4c4c4c" stroke-width="1.3"/><rect x="5.6" y="4.6" width="13" height="13" rx="1.8" stroke="#4c4c4c" stroke-width="1.3"/><path d="M6 11 L12 5 M7 16.8 L18 5.8 M12.3 17 L18.2 11.2" stroke="#4c4c4c" stroke-width="1.3"/></svg>
<svg style="left:280px;top:504px;" width="22" height="23" viewBox="0 0 22 23" fill="none"><rect x="2.6" y="5.6" width="17" height="13" rx="1.8" stroke="#4c4c4c" stroke-width="1.3"/><path d="M7.6 2.5 V21.5 M5.6 2.5 H9.6 L7.6 4.5 Z" stroke="#4c4c4c" stroke-width="1.2"/><path d="M8.5 10 L12.5 6 M8.5 15.5 L15 9 M10.8 18.4 L15 14.2" stroke="#4c4c4c" stroke-width="1.2"/><path d="M15 6 V18.5" stroke="#4c4c4c" stroke-width="1"/></svg>
<svg style="left:316px;top:504px;" width="22" height="23" viewBox="0 0 22 23" fill="none"><rect x="2.6" y="5.6" width="17" height="13" rx="1.8" stroke="#4c4c4c" stroke-width="1.3"/><path d="M10.7 2.5 V21.5 M8.7 2.5 H12.7 L10.7 4.5 Z" stroke="#4c4c4c" stroke-width="1.2"/><path d="M11.5 10.5 L16.2 5.8 M11.5 16 L19 8.5 M15 18.4 L19 14.4" stroke="#4c4c4c" stroke-width="1.2"/></svg>
<svg style="left:386px;top:507px;" width="22" height="18" viewBox="0 0 22 18" fill="none"><rect x="2.6" y="2.6" width="17" height="13" rx="1.8" fill="#2c2c2c" stroke="#bdbdbd" stroke-width="1.3"/><path d="M8.5 6.5 L13.5 11.5 M13.5 6.5 L8.5 11.5" stroke="#d0d0d0" stroke-width="1.4"/></svg>
<svg style="left:422px;top:505px;" width="12" height="22" viewBox="0 0 12 22" fill="none"><path d="M2.5 2 V20" stroke="#bdbdbd" stroke-width="1.3"/><path d="M12 4.6 H7.6 Q5.6 4.6 5.6 6.6 V15.6 Q5.6 17.6 7.6 17.6 H12" stroke="#bdbdbd" stroke-width="1.3"/><path d="M9 8.6 L11.5 11 L9 13.4" stroke="#bdbdbd" stroke-width="1.2"/></svg>
<svg style="left:708px;top:506px;" width="14" height="21" viewBox="0 0 14 21" fill="none"><path d="M10.6 19 V2.6 H3.3 Q2.4 2.6 2.4 3.5 V8 L10.6 13" fill="#333" stroke="#c0c0c0" stroke-width="1.3" stroke-linejoin="round"/></svg>
<svg style="left:745px;top:506px;" width="14" height="21" viewBox="0 0 14 21" fill="none"><path d="M2.6 19 V2.6 H9.9 Q10.8 2.6 10.8 3.5 V8 L2.6 13" fill="#333" stroke="#c0c0c0" stroke-width="1.3" stroke-linejoin="round"/></svg>
<svg style="left:15px;top:543px;" width="22" height="21" viewBox="0 0 22 21" fill="none"><path d="M2.8 4 H17.2 M2.8 8.9 H17.2 M2.8 14.2 H10.4" stroke="#acacac" stroke-width="1.6"/><path d="M11.8 15 H18.2 M15 11.8 V18.2" stroke="#acacac" stroke-width="1.8"/></svg>
<svg style="left:129px;top:542px;" width="21" height="22" viewBox="0 0 21 22" fill="none"><rect x="2.7" y="5.6" width="15.4" height="12" rx="2" fill="#141414" stroke="#c4c4c4" stroke-width="1.3"/><rect x="3.5" y="6.4" width="2.4" height="10.4" fill="#3a3a3a"/><rect x="14.9" y="6.4" width="2.4" height="10.4" fill="#3a3a3a"/><path d="M7 2.4 V19.6 M5.2 2.6 H8.8" stroke="#c4c4c4" stroke-width="1.5"/><path d="M8.2 10.5 L12.8 6 M8.2 15.5 L13.8 10 M11 17 L13.8 14.2" stroke="#c4c4c4" stroke-width="1.2"/><path d="M13.5 6.2 V17" stroke="#c4c4c4" stroke-width="1"/></svg>
<svg style="left:157px;top:542px;" width="21" height="21" viewBox="0 0 21 21" fill="none"><g transform="rotate(45 7.5 13.5)"><path d="M2 5.2 V13.5 A5.5 5.5 0 0 0 13 13.5 V5.2 A2 2 0 0 0 9 5.2 V13.5 A1.5 1.5 0 0 1 6 13.5 V5.2 A2 2 0 0 0 2 5.2 Z" stroke="#c4c4c4" stroke-width="1.2" stroke-linejoin="round"/><circle cx="4" cy="5.3" r="0.9" fill="#c4c4c4"/><circle cx="11" cy="5.3" r="0.9" fill="#c4c4c4"/></g></svg>
<svg style="left:11px;top:578px;" width="14" height="10" viewBox="0 0 14 10" fill="none"><path d="M2.2 7.5 L7 2.7 L11.8 7.5" stroke="#bdbdbd" stroke-width="1.15"/></svg>
<svg style="left:109px;top:576px;" width="18" height="14" viewBox="0 0 18 14" fill="none"><path d="M2 7 Q5 2 9 2 Q13 2 16 7 Q13 12 9 12 Q5 12 2 7 Z" stroke="#c8c8c8" stroke-width="1.2"/><circle cx="9" cy="7" r="2.6" fill="#3a3a3a" stroke="#c8c8c8" stroke-width="1.2"/></svg>
<svg style="left:133px;top:575px;" width="18" height="16" viewBox="0 0 18 16" fill="none"><path d="M2.4 5.3 Q2.4 4.4 3.3 4.4 H5.6 L11.2 1.4 V14.6 L5.6 11.6 H3.3 Q2.4 11.6 2.4 10.7 Z" fill="#3a3a3a" stroke="#c8c8c8" stroke-width="1.2" stroke-linejoin="round"/><path d="M13.8 6.3 V9.7 M15.8 3.5 V12.5" stroke="#c8c8c8" stroke-width="1.2"/></svg>
<svg style="left:161px;top:574px;" width="14" height="17" viewBox="0 0 14 17" fill="none"><path d="M4.6 7.2 V4.6 Q4.6 1.8 7.4 1.8 Q9.7 1.8 10.1 3.8" stroke="#c8c8c8" stroke-width="1.2"/><rect x="2.2" y="7.4" width="9.8" height="8.6" rx="1.3" fill="#3a3a3a" stroke="#c8c8c8" stroke-width="1.2"/></svg>
<svg style="left:11px;top:678px;" width="14" height="10" viewBox="0 0 14 10" fill="none"><path d="M2.2 7.5 L7 2.7 L11.8 7.5" stroke="#bdbdbd" stroke-width="1.15"/></svg>
<svg style="left:109px;top:676px;" width="18" height="14" viewBox="0 0 18 14" fill="none"><path d="M2 7 Q5 2 9 2 Q13 2 16 7 Q13 12 9 12 Q5 12 2 7 Z" stroke="#c8c8c8" stroke-width="1.2"/><circle cx="9" cy="7" r="2.6" fill="#3a3a3a" stroke="#c8c8c8" stroke-width="1.2"/></svg>
<svg style="left:133px;top:675px;" width="18" height="16" viewBox="0 0 18 16" fill="none"><path d="M2.4 5.3 Q2.4 4.4 3.3 4.4 H5.6 L11.2 1.4 V14.6 L5.6 11.6 H3.3 Q2.4 11.6 2.4 10.7 Z" fill="#3a3a3a" stroke="#c8c8c8" stroke-width="1.2" stroke-linejoin="round"/><path d="M13.8 6.3 V9.7 M15.8 3.5 V12.5" stroke="#c8c8c8" stroke-width="1.2"/></svg>
<svg style="left:161px;top:674px;" width="14" height="17" viewBox="0 0 14 17" fill="none"><path d="M4.6 7.2 V4.6 Q4.6 1.8 7.4 1.8 Q9.7 1.8 10.1 3.8" stroke="#c8c8c8" stroke-width="1.2"/><rect x="2.2" y="7.4" width="9.8" height="8.6" rx="1.3" fill="#3a3a3a" stroke="#c8c8c8" stroke-width="1.2"/></svg>
<svg style="left:11px;top:778px;" width="14" height="10" viewBox="0 0 14 10" fill="none"><path d="M2.2 7.5 L7 2.7 L11.8 7.5" stroke="#bdbdbd" stroke-width="1.15"/></svg>
<svg style="left:109px;top:776px;" width="18" height="14" viewBox="0 0 18 14" fill="none"><path d="M2 7 Q5 2 9 2 Q13 2 16 7 Q13 12 9 12 Q5 12 2 7 Z" stroke="#c8c8c8" stroke-width="1.2"/><circle cx="9" cy="7" r="2.6" fill="#3a3a3a" stroke="#c8c8c8" stroke-width="1.2"/></svg>
<svg style="left:133px;top:775px;" width="18" height="16" viewBox="0 0 18 16" fill="none"><path d="M2.4 5.3 Q2.4 4.4 3.3 4.4 H5.6 L11.2 1.4 V14.6 L5.6 11.6 H3.3 Q2.4 11.6 2.4 10.7 Z" fill="#3a3a3a" stroke="#c8c8c8" stroke-width="1.2" stroke-linejoin="round"/><path d="M13.8 6.3 V9.7 M15.8 3.5 V12.5" stroke="#c8c8c8" stroke-width="1.2"/></svg>
<svg style="left:161px;top:774px;" width="14" height="17" viewBox="0 0 14 17" fill="none"><path d="M4.6 7.2 V4.6 Q4.6 1.8 7.4 1.8 Q9.7 1.8 10.1 3.8" stroke="#c8c8c8" stroke-width="1.2"/><rect x="2.2" y="7.4" width="9.8" height="8.6" rx="1.3" fill="#3a3a3a" stroke="#c8c8c8" stroke-width="1.2"/></svg>
<svg style="left:11px;top:851px;" width="14" height="10" viewBox="0 0 14 10" fill="none"><path d="M2.2 7.5 L7 2.7 L11.8 7.5" stroke="#bdbdbd" stroke-width="1.15"/></svg>
<svg style="left:133px;top:848px;" width="18" height="16" viewBox="0 0 18 16" fill="none"><path d="M2.4 5.3 Q2.4 4.4 3.3 4.4 H5.6 L11.2 1.4 V14.6 L5.6 11.6 H3.3 Q2.4 11.6 2.4 10.7 Z" fill="#3a3a3a" stroke="#c8c8c8" stroke-width="1.2" stroke-linejoin="round"/><path d="M13.8 6.3 V9.7 M15.8 3.5 V12.5" stroke="#c8c8c8" stroke-width="1.2"/></svg>
<svg style="left:161px;top:846px;" width="14" height="17" viewBox="0 0 14 17" fill="none"><path d="M4.6 7.2 V4.6 Q4.6 1.8 7.4 1.8 Q9.7 1.8 10.1 3.8" stroke="#c8c8c8" stroke-width="1.2"/><rect x="2.2" y="7.4" width="9.8" height="8.6" rx="1.3" fill="#3a3a3a" stroke="#c8c8c8" stroke-width="1.2"/></svg>
<svg style="left:158px;top:620px;" width="18" height="18" viewBox="0 0 18 18" fill="none"><path d="M3.3 10.8 L9.6 4.5" stroke="#5a80c8" stroke-width="1.2" stroke-dasharray="1.2 0.9"/><path d="M7.4 3.6 H10.6 V6.8" stroke="#5a80c8" stroke-width="1.3"/><path d="M15 6.8 L8.6 13.2" stroke="#5a80c8" stroke-width="1.3"/><path d="M7.7 10.9 V14.1 H10.9" stroke="#5a80c8" stroke-width="1.4"/></svg>
<svg style="left:158px;top:720px;" width="18" height="18" viewBox="0 0 18 18" fill="none"><path d="M3.3 10.8 L9.6 4.5" stroke="#5a80c8" stroke-width="1.2" stroke-dasharray="1.2 0.9"/><path d="M7.4 3.6 H10.6 V6.8" stroke="#5a80c8" stroke-width="1.3"/><path d="M15 6.8 L8.6 13.2" stroke="#5a80c8" stroke-width="1.3"/><path d="M7.7 10.9 V14.1 H10.9" stroke="#5a80c8" stroke-width="1.4"/></svg>
<svg style="left:31px;top:646px;" width="34" height="19" viewBox="0 0 34 19" fill="none"><path d="M3 2 V18 M3 10 H7.8" stroke="#c4c4c4" stroke-width="1.4"/><rect x="12" y="7.6" width="9.6" height="5.6" rx="2.8" stroke="#c4c4c4" stroke-width="1.2"/><rect x="20.4" y="7.6" width="9.6" height="5.6" rx="2.8" stroke="#c4c4c4" stroke-width="1.2"/><path d="M15 10.4 H27" stroke="#8a8a8a" stroke-width="1"/></svg>
<svg style="left:31px;top:746px;" width="34" height="19" viewBox="0 0 34 19" fill="none"><path d="M3 2 V18 M3 10 H7.8" stroke="#c4c4c4" stroke-width="1.4"/><rect x="12" y="7.6" width="9.6" height="5.6" rx="2.8" stroke="#c4c4c4" stroke-width="1.2"/><rect x="20.4" y="7.6" width="9.6" height="5.6" rx="2.8" stroke="#c4c4c4" stroke-width="1.2"/><path d="M15 10.4 H27" stroke="#8a8a8a" stroke-width="1"/></svg>
<svg style="left:185px;top:575px;" width="18" height="16" viewBox="0 0 18 16" fill="none"><rect x="2.5" y="2.4" width="13" height="11.6" rx="2" fill="#555" stroke="#c4c4c4" stroke-width="1.1"/><path d="M3.2 7.5 L8.2 2.6 M3.6 11.6 L12.7 2.6 M5.6 13.8 L15 4.5 M9.7 13.8 L15.2 8.4" stroke="#1e1e1e" stroke-width="1.1"/></svg>
<svg style="left:186px;top:676px;" width="14" height="16" viewBox="0 0 14 16" fill="none"><path d="M3 12.8 L3.5 10.2 L10 3.6 Q10.8 2.8 11.6 3.6 L12.3 4.3 Q13 5.1 12.3 5.9 L5.8 12.4 Z" stroke="#fff" stroke-width="1.2" stroke-linejoin="round"/><path d="M8.8 4.8 L11.1 7.1" stroke="#fff" stroke-width="1"/></svg>
<svg style="left:204px;top:676px;" width="16" height="16" viewBox="0 0 16 16" fill="none"><path d="M2.6 3 H14 M8.3 3 V14" stroke="#a0a0a0" stroke-width="1.4"/></svg>
<svg style="left:185px;top:775px;" width="18" height="16" viewBox="0 0 18 16" fill="none"><path d="M3.4 2.8 H11.8 Q13 2.8 13 4 V5.6 L16 3.8 V11.2 L13 9.4 V11 Q13 12.2 11.8 12.2 H3.4 Q2.2 12.2 2.2 11 V4 Q2.2 2.8 3.4 2.8 Z" fill="#505050" stroke="#ececec" stroke-width="1.2" stroke-linejoin="round"/></svg>
<svg style="left:184px;top:797px;" width="17" height="18" viewBox="0 0 17 18" fill="none"><text x="3.5" y="12" font-family="Liberation Serif" font-style="italic" font-size="11" fill="#fff">fx</text></svg>
<svg style="left:210px;top:710px;" width="26" height="24" viewBox="0 0 26 24" fill="none"><defs><pattern id="ck" width="3" height="3" patternUnits="userSpaceOnUse"><rect width="3" height="3" fill="#3a3a50"/><rect width="1.5" height="1.5" fill="#8a8aa8"/><rect x="1.5" y="1.5" width="1.5" height="1.5" fill="#8a8aa8"/></pattern></defs><path d="M3 20.5 L10.5 3 H19.5 L23 20.5 H17 L16.3 17 H11 L9.5 20.5 Z M12.3 13 H15.6 L15 8.5 Z" fill="url(#ck)" stroke="#f2d000" stroke-width="2" stroke-linejoin="round" fill-rule="evenodd"/></svg>
<svg style="left:13px;top:873px;" width="22" height="18" viewBox="0 0 22 18" fill="none"><rect x="2.6" y="2.6" width="17" height="13" rx="1.8" stroke="#bdbdbd" stroke-width="1.3"/><path d="M5.6 9.1 H16.6 M8 6.8 L5.6 9.1 L8 11.4 M14.2 6.8 L16.6 9.1 L14.2 11.4" stroke="#bdbdbd" stroke-width="1.2"/></svg>
<svg style="left:45px;top:875px;" width="18" height="14" viewBox="0 0 18 14" fill="none"><path d="M2.8 11.8 L5.5 5.2 Q6.2 3.4 7.2 5 L8.5 7 L10.4 5.2 Q11.3 4.3 12 5.4 L15.3 11.2 Q15.6 11.8 15 11.8 Z" stroke="#bdbdbd" stroke-width="1.2" stroke-linejoin="round"/></svg>
<svg style="left:99px;top:877px;" width="10" height="10" viewBox="0 0 10 10" fill="none"><circle cx="4.5" cy="4.5" r="3.9" fill="#363636" stroke="#b4b4b4" stroke-width="1.2"/></svg>
<svg style="left:157px;top:873px;" width="22" height="18" viewBox="0 0 22 18" fill="none"><path d="M2.6 15.2 L8.4 3.8 Q9.2 2.4 10 3.8 L12.6 8.6 L14.4 6.2 Q15.2 5.2 16 6.2 L19.6 15.2 Z" stroke="#bdbdbd" stroke-width="1.3" stroke-linejoin="round"/></svg>
<div style="left:434px;top:57px;width:260px;height:772px;background:#333333;"></div>
<span id="t55" style="transform:scaleX(0.9500);left:447px;top:69px;font-size:12px;line-height:12px;color:#d0d0d0;font-weight:400;">始点の表示</span>
<span id="t56" style="transform:scaleX(0.6238);left:667px;top:69px;font-size:12px;line-height:12px;color:#d0d0d0;font-weight:400;">S</span>
<span id="t57" style="transform:scaleX(0.9792);left:447px;top:101px;font-size:12px;line-height:12px;color:#d0d0d0;font-weight:400;">終点表示</span>
<span id="t58" style="transform:scaleX(0.8170);left:666px;top:101px;font-size:12px;line-height:12px;color:#d0d0d0;font-weight:400;">F</span>
<span id="t59" style="transform:scaleX(0.9815);left:447px;top:133px;font-size:12px;line-height:12px;color:#606060;font-weight:400;">選択範囲を表示解除</span>
<span id="t60" style="transform:scaleX(1.0331);left:631px;top:133px;font-size:12px;line-height:12px;color:#606060;font-weight:400;">Shift+D</span>
<div style="left:445px;top:159px;width:244px;height:1px;background:#474747;"></div>
<span id="t61" style="transform:scaleX(0.8367);left:447px;top:173px;font-size:12px;line-height:12px;color:#d0d0d0;font-weight:400;">切り取り(<u>T</u>)</span>
<span id="t62" style="transform:scaleX(0.9796);left:639px;top:173px;font-size:12px;line-height:12px;color:#d0d0d0;font-weight:400;">Ctrl+X</span>
<span id="t63" style="transform:scaleX(0.7214);left:447px;top:205px;font-size:12px;line-height:12px;color:#d0d0d0;font-weight:400;">コピー(<u>C</u>)</span>
<span id="t64" style="transform:scaleX(0.9609);left:639px;top:205px;font-size:12px;line-height:12px;color:#d0d0d0;font-weight:400;">Ctrl+C</span>
<span id="t65" style="transform:scaleX(0.8435);left:447px;top:237px;font-size:12px;line-height:12px;color:#606060;font-weight:400;">貼り付け(<u>P</u>)</span>
<span id="t66" style="transform:scaleX(0.9796);left:639px;top:237px;font-size:12px;line-height:12px;color:#606060;font-weight:400;">Ctrl+V</span>
<span id="t67" style="transform:scaleX(0.8386);left:447px;top:269px;font-size:12px;line-height:12px;color:#606060;font-weight:400;">今のマウスカーソル位置に貼り付け(<u>N</u>)</span>
<span id="t68" style="transform:scaleX(0.8233);left:447px;top:301px;font-size:12px;line-height:12px;color:#d0d0d0;font-weight:400;">クリップ削除(<u>D</u>)</span>
<span id="t69" style="transform:scaleX(0.9514);left:639px;top:301px;font-size:12px;line-height:12px;color:#d0d0d0;font-weight:400;">Delete</span>
<span id="t70" style="transform:scaleX(0.8233);left:447px;top:333px;font-size:12px;line-height:12px;color:#d0d0d0;font-weight:400;">リップル削除(<u>R</u>)</span>
<span id="t71" style="transform:scaleX(0.9775);left:613px;top:333px;font-size:12px;line-height:12px;color:#d0d0d0;font-weight:400;">Ctrl+Delete</span>
<div style="left:445px;top:359px;width:244px;height:1px;background:#474747;"></div>
<span id="t72" style="transform:scaleX(0.7703);left:447px;top:373px;font-size:12px;line-height:12px;color:#606060;font-weight:400;">クリップトランジション貼り付け(<u>A</u>)</span>
<span id="t73" style="transform:scaleX(0.9796);left:639px;top:373px;font-size:12px;line-height:12px;color:#606060;font-weight:400;">Ctrl+V</span>
<div style="left:445px;top:399px;width:244px;height:1px;background:#474747;"></div>
<span id="t74" style="transform:scaleX(0.7179);left:447px;top:413px;font-size:12px;line-height:12px;color:#d0d0d0;font-weight:400;">エフェクト/オーバーレイコピー</span>
<span id="t75" style="transform:scaleX(1.0116);left:616px;top:413px;font-size:12px;line-height:12px;color:#d0d0d0;font-weight:400;">Ctrl+Alt+C</span>
<span id="t76" style="transform:scaleX(0.7581);left:447px;top:445px;font-size:12px;line-height:12px;color:#606060;font-weight:400;">エフェクト/オーバーレイ貼り付け</span>
<span id="t77" style="transform:scaleX(0.9796);left:639px;top:445px;font-size:12px;line-height:12px;color:#606060;font-weight:400;">Ctrl+V</span>
<span id="t78" style="transform:scaleX(0.7854);left:447px;top:477px;font-size:12px;line-height:12px;color:#d0d0d0;font-weight:400;">全てのエフェクト/オーバーレイ削除(<u>E</u>)</span>
<div style="left:445px;top:503px;width:244px;height:1px;background:#474747;"></div>
<span id="t79" style="transform:scaleX(0.8996);left:447px;top:517px;font-size:12px;line-height:12px;color:#d0d0d0;font-weight:400;">倍速(<u>S</u>)</span>
<span id="t80" style="transform:scaleX(1.0442);left:641px;top:517px;font-size:12px;line-height:12px;color:#d0d0d0;font-weight:400;">Alt+R</span>
<span id="t81" style="transform:scaleX(0.8739);left:447px;top:549px;font-size:12px;line-height:12px;color:#606060;font-weight:400;">長さを変更(<u>U</u>)</span>
<div style="left:445px;top:575px;width:244px;height:1px;background:#474747;"></div>
<span id="t82" style="transform:scaleX(0.8317);left:447px;top:589px;font-size:12px;line-height:12px;color:#606060;font-weight:400;">再生ヘッドの位置にクリップを移動(<u>V</u>)</span>
<span id="t83" style="transform:scaleX(0.8646);left:447px;top:621px;font-size:12px;line-height:12px;color:#d0d0d0;font-weight:400;">再生ヘッドを移動(<u>O</u>)</span>
<svg style="left:673px;top:622px;" width="8" height="11" viewBox="0 0 8 11" fill="none"><path d="M1.5 1 L6.5 5.5 L1.5 10" stroke="#c8c8c8" stroke-width="1.2"/></svg>
<div style="left:445px;top:647px;width:244px;height:1px;background:#474747;"></div>
<span id="t84" style="transform:scaleX(0.9662);left:447px;top:661px;font-size:12px;line-height:12px;color:#606060;font-weight:400;">属性編集(<u>I</u>)...</span>
<span id="t85" style="transform:scaleX(1.0339);left:642px;top:661px;font-size:12px;line-height:12px;color:#606060;font-weight:400;">Alt+P</span>
<span id="t86" style="transform:scaleX(0.7851);left:447px;top:693px;font-size:12px;line-height:12px;color:#d0d0d0;font-weight:400;">エフェクト/オーバーレイ属性(<u>F</u>)...</span>
<span id="t87" style="transform:scaleX(1.0339);left:642px;top:693px;font-size:12px;line-height:12px;color:#d0d0d0;font-weight:400;">Alt+S</span>
<div style="left:445px;top:719px;width:244px;height:1px;background:#474747;"></div>
<span id="t88" style="transform:scaleX(0.7870);left:447px;top:733px;font-size:12px;line-height:12px;color:#d0d0d0;font-weight:400;">オーディオ調整(<u>J</u>)...</span>
<span id="t89" style="transform:scaleX(1.0442);left:641px;top:733px;font-size:12px;line-height:12px;color:#d0d0d0;font-weight:400;">Alt+D</span>
<span id="t90" style="transform:scaleX(0.8444);left:447px;top:765px;font-size:12px;line-height:12px;color:#d0d0d0;font-weight:400;">ミュートON/OFF(<u>M</u>)</span>
<div style="left:445px;top:791px;width:244px;height:1px;background:#474747;"></div>
<div style="left:436px;top:795px;width:256px;height:32px;background:#474747;"></div>
<span id="t91" style="transform:scaleX(0.8072);left:447px;top:805px;font-size:12px;line-height:12px;color:#f2f2f2;font-weight:400;">選択したクリップを書き出す...</span>
<div style="left:0px;top:0px;width:1280px;height:895px;background:transparent;border:1px solid #3c3c3c"></div>
</body></html>
